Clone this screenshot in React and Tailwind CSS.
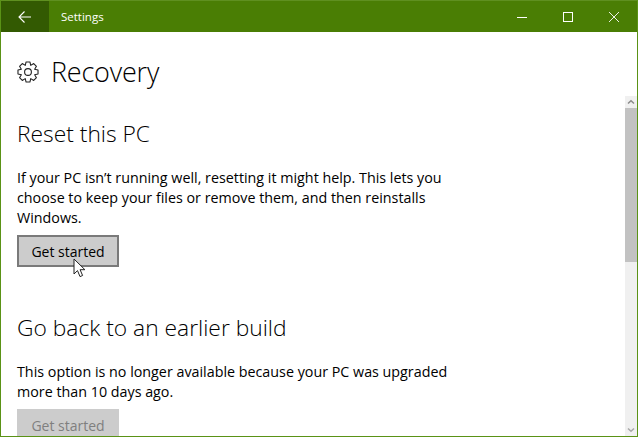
const gearPath = (() => {
  const teeth = 8, cx = 11, cy = 11, ro = 10.2, ri = 7.2;
  const step = (Math.PI * 2) / teeth;
  const pts = [];
  for (let i = 0; i < teeth; i++) {
    const a = i * step - Math.PI / 2;
    [[ri, -0.5], [ro, -0.24], [ro, 0.24], [ri, 0.5]].forEach(([r, k]) => {
      const t = a + k * step;
      pts.push(`${(cx + r * Math.cos(t)).toFixed(2)} ${(cy + r * Math.sin(t)).toFixed(2)}`);
    });
  }
  return "M" + pts.join("L") + "Z";
})();

export default function App() {
  return (
    <div className="w-[638px] h-[438px] bg-white overflow-hidden font-['Open_Sans','Noto_Sans',sans-serif]">
      <div className="relative w-[638px] h-[437px] flex flex-col border-x border-b border-[#5a9216] overflow-hidden bg-white">
        <header className="h-8 shrink-0 -mx-px flex items-center bg-[#4a7e04] border-t border-[#5f9020] text-white">
          <div className="ml-px w-12 h-full bg-[#335a02] flex items-center justify-center">
            <svg width="16" height="14" viewBox="0 0 16 14" fill="none" stroke="white" strokeWidth="1.1">
              <path d="M14 7H2.2M7.5 1.5L2 7l5.5 5.5" />
            </svg>
          </div>
          <span className="ml-3 text-[11.5px] leading-none font-normal">Settings</span>
          <div className="ml-auto mr-[19px] flex items-center gap-[36px]">
            <svg width="10" height="10" viewBox="0 0 10 10"><path d="M0 5.5h10" stroke="white" strokeWidth="1" /></svg>
            <svg width="10" height="10" viewBox="0 0 10 10" fill="none"><rect x="0.5" y="0.5" width="9" height="9" stroke="white" /></svg>
            <svg width="10" height="10" viewBox="0 0 10 10" fill="none"><path d="M0 0l10 10M10 0L0 10" stroke="white" strokeWidth="0.9" /></svg>
          </div>
        </header>
        <div className="flex-1 flex min-h-0">
          <main className="flex-1 pl-4 min-w-0 overflow-hidden">
            <div className="flex items-center h-[30px] mt-[25px] gap-[12px]">
              <svg width="22" height="22" viewBox="0 0 22 22" fill="none" stroke="#222" strokeWidth="1.1" strokeLinejoin="round">
                <path d={gearPath} />
                <circle cx="11" cy="11" r="3.4" />
              </svg>
              <h1 className="text-[27px] leading-[30px] font-light text-black tracking-[-0.2px]">Recovery</h1>
            </div>
            <h2 className="mt-[33px] text-[22.8px] leading-[28px] font-light text-black">Reset this PC</h2>
            <p className="mt-[20px] w-[440px] text-[14.3px] leading-5 text-black">
              If your PC isn’t running well, resetting it might help. This lets you choose to keep your files or remove them, and then reinstalls Windows.
            </p>
            <button className="block mt-[7px] w-[102px] h-8 border-2 border-[#7a7a7a] bg-[#cccccc] text-[14px] text-black">Get started</button>
            <h2 className="mt-[47px] text-[22.8px] leading-[28px] font-light text-black">Go back to an earlier build</h2>
            <p className="mt-[20px] w-[440px] text-[14.3px] leading-5 text-black">
              This option is no longer available because your PC was upgraded more than 10 days ago.
            </p>
            <button className="block mt-[7px] w-[102px] h-8 bg-[#cccccc] text-[14px] text-[#7f7f7f]">Get started</button>
          </main>
          <aside className="w-3 shrink-0 mt-16 bg-[#f0f0f0] flex flex-col">
            <div className="h-3 flex items-center justify-center">
              <svg width="8" height="6" viewBox="0 0 8 6" fill="none" stroke="#8a8a8a" strokeWidth="1.5"><path d="M1 4.5L4 1.7l3 2.8" /></svg>
            </div>
            <div className="h-[154px] bg-[#c2c2c2]" />
            <div className="flex-1" />
            <div className="h-3 flex items-center justify-center">
              <svg width="8" height="6" viewBox="0 0 8 6" fill="none" stroke="#a8a8a8" strokeWidth="1.5"><path d="M1 1.5L4 4.3l3-2.8" /></svg>
            </div>
          </aside>
        </div>
        <svg className="absolute left-[72px] top-[258px]" width="13" height="20" viewBox="0 0 13 20">
          <path d="M1 1v15l3.5-3.4 2.5 6 2.6-1.1-2.5-5.8h4.8z" fill="white" stroke="#222" strokeWidth="1" />
        </svg>
      </div>
    </div>
  );
}
